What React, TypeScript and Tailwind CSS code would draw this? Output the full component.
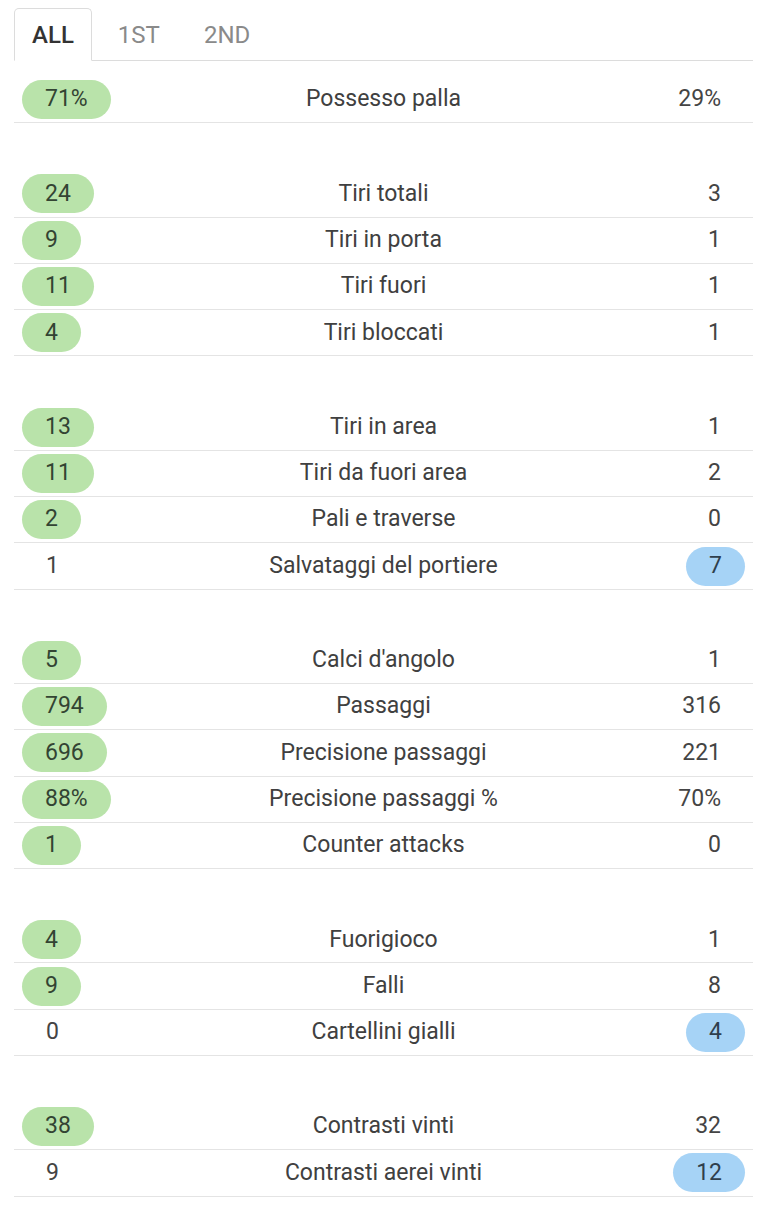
import { useState } from 'react';

type Stat = { label: string; home: string; away: string; win?: 'home' | 'away' };

const groups: Stat[][] = [
  [{ label: 'Possesso palla', home: '71%', away: '29%', win: 'home' }],
  [
    { label: 'Tiri totali', home: '24', away: '3', win: 'home' },
    { label: 'Tiri in porta', home: '9', away: '1', win: 'home' },
    { label: 'Tiri fuori', home: '11', away: '1', win: 'home' },
    { label: 'Tiri bloccati', home: '4', away: '1', win: 'home' },
  ],
  [
    { label: 'Tiri in area', home: '13', away: '1', win: 'home' },
    { label: 'Tiri da fuori area', home: '11', away: '2', win: 'home' },
    { label: 'Pali e traverse', home: '2', away: '0', win: 'home' },
    { label: 'Salvataggi del portiere', home: '1', away: '7', win: 'away' },
  ],
  [
    { label: "Calci d'angolo", home: '5', away: '1', win: 'home' },
    { label: 'Passaggi', home: '794', away: '316', win: 'home' },
    { label: 'Precisione passaggi', home: '696', away: '221', win: 'home' },
    { label: 'Precisione passaggi %', home: '88%', away: '70%', win: 'home' },
    { label: 'Counter attacks', home: '1', away: '0', win: 'home' },
  ],
  [
    { label: 'Fuorigioco', home: '4', away: '1', win: 'home' },
    { label: 'Falli', home: '9', away: '8', win: 'home' },
    { label: 'Cartellini gialli', home: '0', away: '4', win: 'away' },
  ],
  [
    { label: 'Contrasti vinti', home: '38', away: '32', win: 'home' },
    { label: 'Contrasti aerei vinti', home: '9', away: '12', win: 'away' },
  ],
];

const Value = ({ value, pill }: { value: string; pill?: 'green' | 'blue' }) => {
  if (pill === 'green') {
    return <span className="h-[39px] rounded-full px-[23px] flex items-center bg-[#b9e3aa] text-[#334433]">{value}</span>;
  }
  if (pill === 'blue') {
    return <span className="h-[39px] rounded-full px-[23px] flex items-center bg-[#a6d3f6] text-[#2f3f4d]">{value}</span>;
  }
  return <span className="h-[39px] px-6 flex items-center text-[#444]">{value}</span>;
};

const App = () => {
  const [tab, setTab] = useState('ALL');
  const tabs = ['ALL', '1ST', '2ND'];

  return (
    <div className="bg-white min-h-[1226px] px-[14px] pt-2 font-['Roboto',sans-serif]">
      <div className="flex border-b border-[#dcdcdc] w-[739px]">
        {tabs.map((t) => (
          <button
            key={t}
            onClick={() => setTab(t)}
            className={
              t === tab
                ? 'h-[53px] px-[17px] -mb-px mr-2 border border-[#dcdcdc] border-b-white rounded-t-[5px] bg-white text-[24px] font-medium text-[#333]'
                : 'h-[53px] px-[17px] -mb-px mr-2 border border-transparent text-[24px] text-[#8a8a8a]'
            }
          >
            {t}
          </button>
        ))}
      </div>

      <div className="mt-4 w-[739px]">
        {groups.map((group, gi) => (
          <div key={gi} className={gi > 0 ? 'mt-12' : ''}>
            {group.map((s) => (
              <div key={s.label} className="h-[46.3px] flex items-center px-2 border-b border-[#e4e4e4] text-[23px]">
                <div className="w-[160px] flex justify-start">
                  <Value value={s.home} pill={s.win === 'home' ? 'green' : undefined} />
                </div>
                <div className="flex-1 text-center text-[#404040]">{s.label}</div>
                <div className="w-[160px] flex justify-end">
                  <Value value={s.away} pill={s.win === 'away' ? 'blue' : undefined} />
                </div>
              </div>
            ))}
          </div>
        ))}
      </div>
    </div>
  );
};

export default App;
